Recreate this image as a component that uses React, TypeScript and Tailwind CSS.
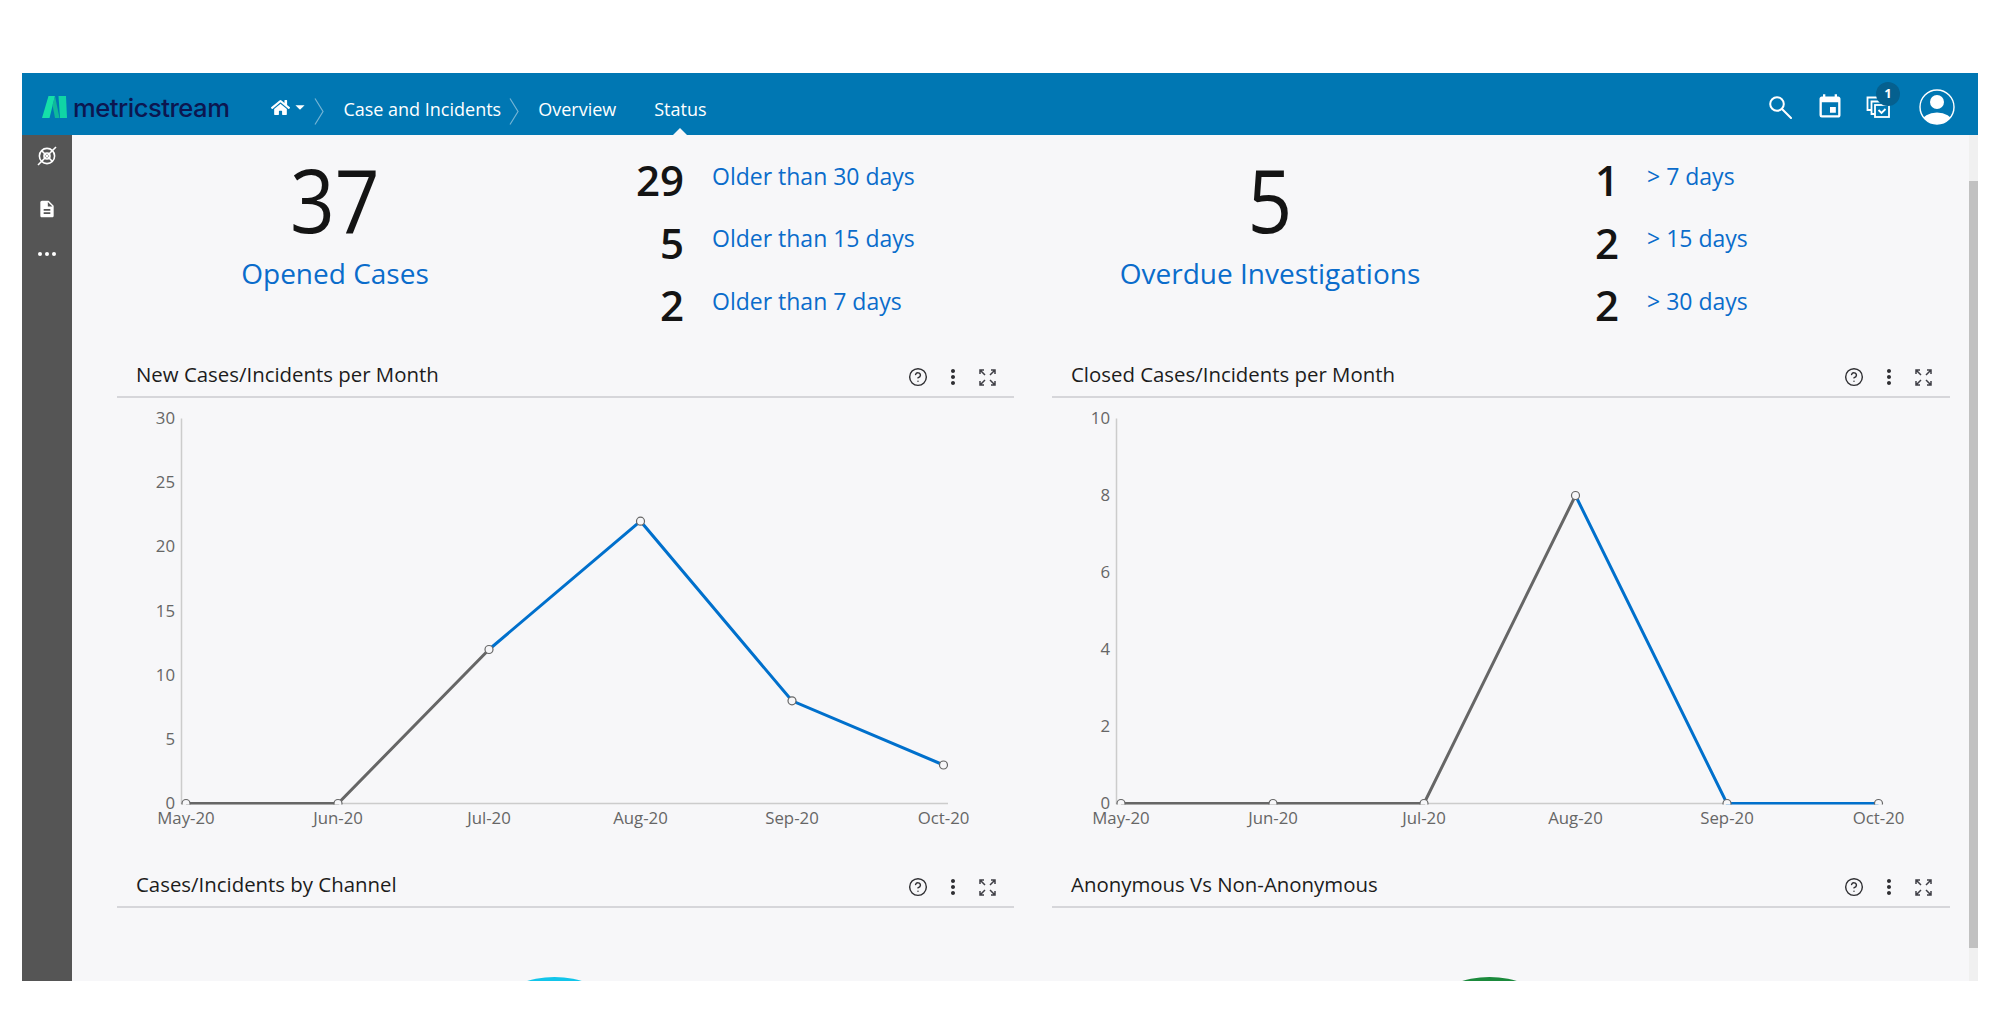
import { CircleHelp } from "lucide-react";
import { FaHome } from "react-icons/fa";
import { MdArrowDropDown, MdDescription, MdEvent, MdMoreVert } from "react-icons/md";

const X = [69, 221, 372, 523.5, 675, 826.5];
const MONTHS = ["May-20", "Jun-20", "Jul-20", "Aug-20", "Sep-20", "Oct-20"];
const TOP = 20.5;
const BOTTOM = 405.5;

const Chevron = () => (
  <svg width="10" height="27" viewBox="0 0 10 27" fill="none" stroke="#ffffff" strokeOpacity="0.45" strokeWidth="1.2" className="mt-[8px]">
    <path d="M1 0.5l8 13-8 13" />
  </svg>
);

const Logo = () => (
  <svg width="25" height="22" viewBox="0 0 25 22">
    <path d="M0 22L6.5 0H13L7.5 22Z" fill="#15dfa9" />
    <path d="M13 0L17.5 22H13L10.5 9Z" fill="#0fb89a" />
    <path d="M16.5 0H24L25 22H18Z" fill="#10d5a5" />
  </svg>
);

const TargetOff = () => (
  <svg width="20" height="20" viewBox="0 0 20 20" fill="none" stroke="#fff" strokeWidth="1.6">
    <circle cx="10" cy="10" r="7.6" />
    <circle cx="10" cy="10" r="3" />
    <path d="M1 19L19 1M4.5 4.5l11 11" />
  </svg>
);

const Magnifier = () => (
  <svg width="23" height="23" viewBox="0 0 23 23" fill="none" stroke="#fff" strokeWidth="2">
    <circle cx="8" cy="8" r="6.8" />
    <path d="M13 13l9 9" strokeLinecap="round" />
  </svg>
);

const StackCheck = () => (
  <svg width="24" height="22" viewBox="0 0 24 22" fill="none" stroke="#fff" strokeWidth="1.8">
    <path d="M5 14H1.5V1.5H14V4" />
    <path d="M9 18H5.5V5.5H18V8" />
    <rect x="9" y="9" width="14" height="12" />
    <path d="M12.5 14l3 3 4-4" />
  </svg>
);

const Avatar = () => (
  <svg width="36" height="36" viewBox="0 0 36 36">
    <clipPath id="av">
      <circle cx="18" cy="18" r="17" />
    </clipPath>
    <circle cx="18" cy="18" r="17" fill="none" stroke="#fff" strokeWidth="1.4" />
    <circle cx="18" cy="13" r="7" fill="#fff" />
    <ellipse cx="18" cy="33" rx="15" ry="9.5" fill="#fff" clipPath="url(#av)" />
  </svg>
);

const Expand = () => (
  <svg width="17" height="17" viewBox="0 0 17 17" fill="none" stroke="#3f3f46" strokeWidth="1.5">
    <path d="M1 5V1h4M1 1l5 5M12 1h4v4M16 1l-5 5M1 12v4h4M1 16l5-5M16 12v4h-4M16 16l-5-5" />
  </svg>
);

const PanelHeader = ({ title }: { title: string }) => (
  <div className="flex h-[44px] items-center justify-between border-b-2 border-[#d6d6da] pl-[19px] pr-[18px]">
    <span className="mb-[2px] text-[20.4px] leading-[28px] text-[#1c1c1c]">{title}</span>
    <div className="mt-1 flex items-center gap-[18px] text-[#2f2f33]">
      <CircleHelp size={20} strokeWidth={1.7} className="mr-[-1px]" />
      <MdMoreVert size={24} className="-mx-[4px]" />
      <Expand />
    </div>
  </div>
);

const LineChart = ({ id, values, max, ticks, split }: { id: string; values: number[]; max: number; ticks: number[]; split: number }) => {
  const y = (v: number) => BOTTOM - (v / max) * (BOTTOM - TOP);
  const pts = values.map((v, i) => `${X[i]},${y(v)}`);
  return (
    <svg width="897" height="466" className="block" fontSize="16.8" fill="#666666">
      <clipPath id={id}>
        <rect x="0" y="0" width="897" height={BOTTOM + 1} />
      </clipPath>
      <path d={`M64.5 ${TOP}V${BOTTOM}H831`} fill="none" stroke="#cccccc" strokeWidth="1.5" />
      {ticks.map((t) => (
        <text key={t} x="58" y={y(t) + 5.5} textAnchor="end">
          {t}
        </text>
      ))}
      {MONTHS.map((m, i) => (
        <text key={m} x={X[i]} y="426" textAnchor="middle">
          {m}
        </text>
      ))}
      <g clipPath={`url(#${id})`}>
        <polyline points={pts.slice(0, split + 1).join(" ")} fill="none" stroke="#666666" strokeWidth="3" />
        <polyline points={pts.slice(split).join(" ")} fill="none" stroke="#0070cc" strokeWidth="3" />
        {values.map((v, i) => (
          <circle key={i} cx={X[i]} cy={y(v)} r="4" fill="#f7f7f9" stroke="#666666" strokeWidth="1.2" />
        ))}
      </g>
    </svg>
  );
};

const StatBlock = ({ value, label }: { value: string; label: string }) => (
  <div className="w-[436px] pt-[21px] text-center">
    <div className="inline-block scale-x-[0.9] text-[87px] leading-[87px] text-[#141414]">{value}</div>
    <div className="mt-[10px] text-[28px] leading-[40px] text-[#0a6ccb]">{label}</div>
  </div>
);

const StatList = ({ rows }: { rows: [string, string][] }) => (
  <div className="grid grid-cols-[131px_auto] content-start gap-x-[28px] pt-[14px]">
    {rows.map(([n, label]) => (
      <div key={label} className="col-span-2 grid h-[62.5px] grid-cols-subgrid items-center">
        <span className="text-right text-[42px] font-semibold leading-[62px] text-[#141414]">{n}</span>
        <span className="pb-[9px] text-[23px] leading-[32px] text-[#0a6ccb]">{label}</span>
      </div>
    ))}
  </div>
);

export default function App() {
  return (
    <div className="h-[1031px] w-[2000px] overflow-hidden bg-white px-[22px] pt-[73px] font-['Open_Sans',sans-serif]">
      <div className="flex h-[908px] w-[1956px] flex-col">
        <header className="flex h-[62px] shrink-0 items-center bg-[#0077b3] pl-[20px] pr-[23px] pt-[6px] text-white">
          <Logo />
          <span className="ml-[6px] mt-[2px] font-['Inter',sans-serif] text-[25.6px] font-medium leading-none tracking-[-0.5px] text-[#0c1650]">metricstream</span>
          <FaHome size={19} className="ml-[42px]" />
          <MdArrowDropDown size={22} className="-ml-[1px]" />
          <span className="ml-[3px]"><Chevron /></span>
          <span className="ml-[19px] mt-[4px] text-[18px]">Case and Incidents</span>
          <span className="ml-[8px]"><Chevron /></span>
          <span className="ml-[19px] mt-[4px] text-[18px]">Overview</span>
          <span className="relative ml-[38px] -mt-[6px] flex h-[62px] items-center pt-[10px] text-[18px]">
            Status
            <span className="absolute bottom-0 left-1/2 h-0 w-0 -translate-x-1/2 border-x-[7px] border-b-[7px] border-x-transparent border-b-[#f7f7f9]" />
          </span>
          <div className="ml-auto flex items-center">
            <Magnifier />
            <MdEvent size={28} className="ml-[24px]" />
            <span className="relative ml-[22px]">
              <StackCheck />
              <span className="absolute -right-[10px] -top-[14px] flex h-[24px] w-[24px] items-center justify-center rounded-full bg-[#05608f] text-[13px] font-bold">1</span>
            </span>
            <span className="ml-[29px]"><Avatar /></span>
          </div>
        </header>
        <div className="flex min-h-0 flex-1">
          <aside className="flex w-[50px] shrink-0 flex-col items-center bg-[#555555] text-white">
            <span className="mt-[11px]"><TargetOff /></span>
            <MdDescription size={20} className="mt-[33px]" />
            <span className="mt-[33px] flex gap-[3px]">
              <i className="h-[4px] w-[4px] rounded-full bg-white" />
              <i className="h-[4px] w-[4px] rounded-full bg-white" />
              <i className="h-[4px] w-[4px] rounded-full bg-white" />
            </span>
          </aside>
          <main className="min-w-0 flex-1 overflow-hidden bg-[#f7f7f9] pl-[45px]">
            <div className="grid grid-cols-[897px_898px] gap-x-[38px]">
              <section className="flex h-[219px]">
                <StatBlock value="37" label="Opened Cases" />
                <StatList rows={[["29", "Older than 30 days"], ["5", "Older than 15 days"], ["2", "Older than 7 days"]]} />
              </section>
              <section className="flex h-[219px]">
                <StatBlock value="5" label="Overdue Investigations" />
                <StatList rows={[["1", "> 7 days"], ["2", "> 15 days"], ["2", "> 30 days"]]} />
              </section>
              <section>
                <PanelHeader title="New Cases/Incidents per Month" />
                <LineChart id="c1" values={[0, 0, 12, 22, 8, 3]} max={30} ticks={[0, 5, 10, 15, 20, 25, 30]} split={2} />
              </section>
              <section>
                <PanelHeader title="Closed Cases/Incidents per Month" />
                <LineChart id="c2" values={[0, 0, 0, 8, 0, 0]} max={10} ticks={[0, 2, 4, 6, 8, 10]} split={3} />
              </section>
              <section>
                <PanelHeader title="Cases/Incidents by Channel" />
                <svg width="897" height="80" className="block">
                  <circle cx="437.5" cy="164" r="95" fill="#12c5ea" />
                </svg>
              </section>
              <section>
                <PanelHeader title="Anonymous Vs Non-Anonymous" />
                <svg width="897" height="80" className="block">
                  <circle cx="437.5" cy="164" r="95" fill="#1b8a3c" />
                </svg>
              </section>
            </div>
          </main>
          <div className="w-[9px] shrink-0 bg-[#f0f0f0] pt-[46px]">
            <div className="h-[767px] bg-[#c1c1c1]" />
          </div>
        </div>
      </div>
    </div>
  );
}
